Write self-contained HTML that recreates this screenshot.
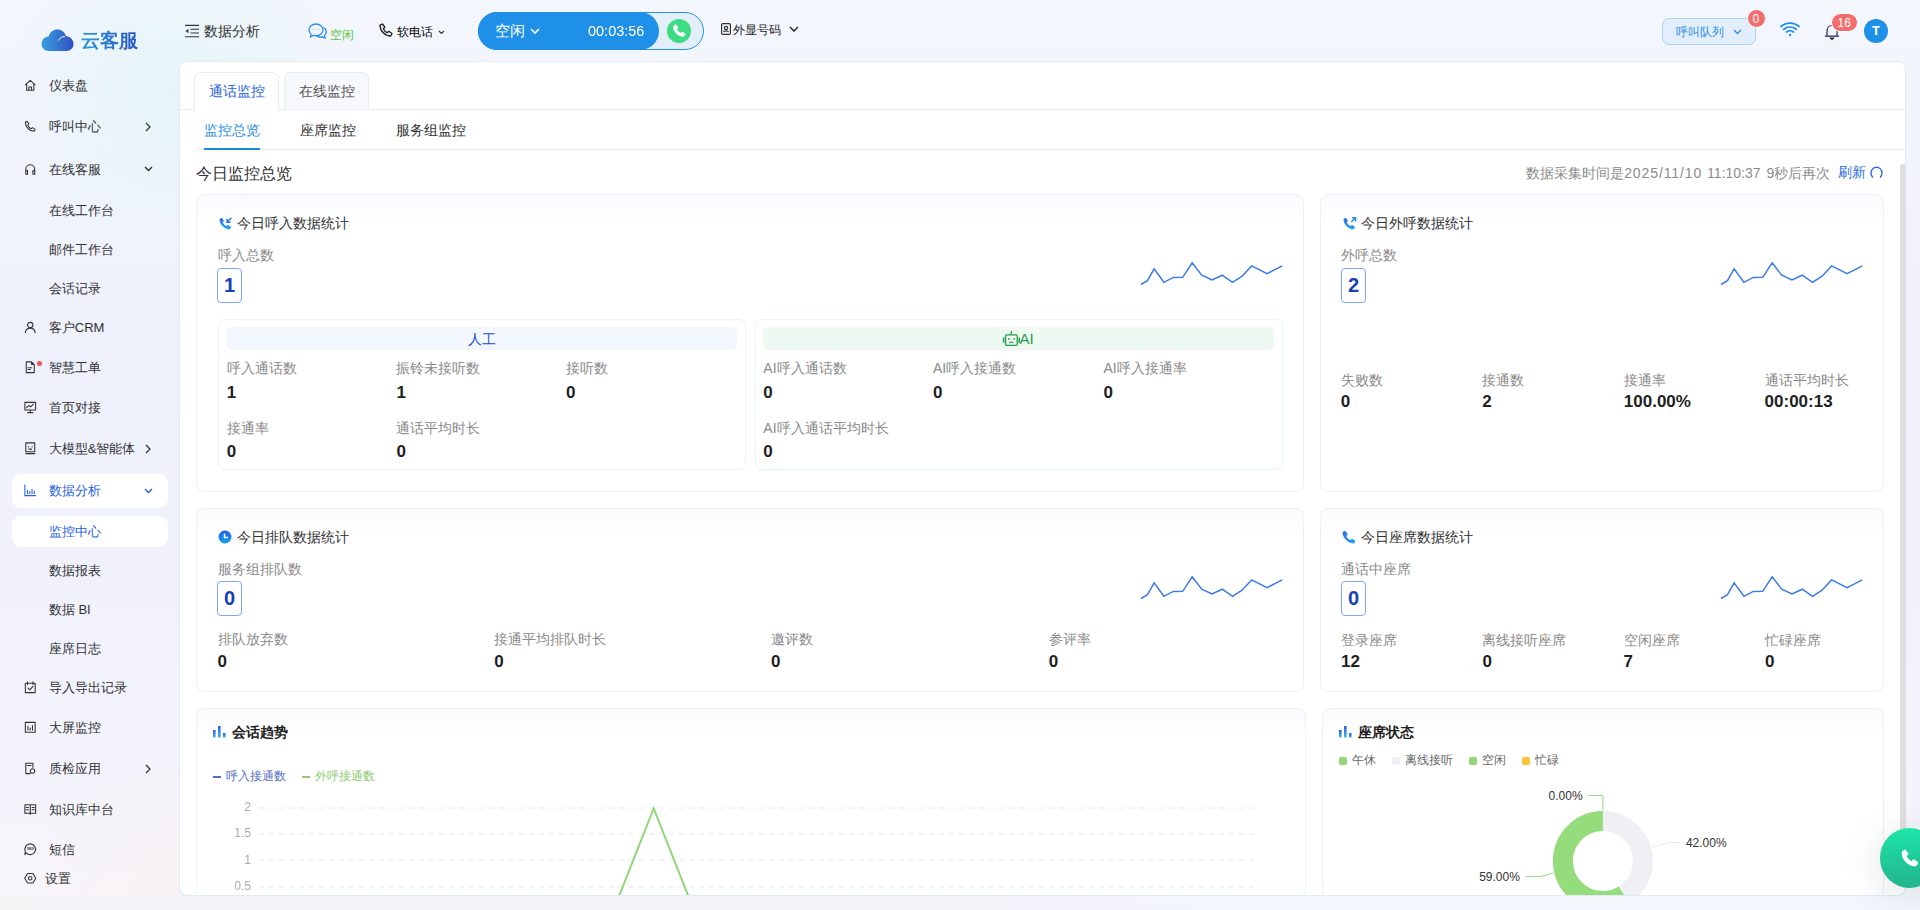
<!DOCTYPE html><html><head><meta charset="utf-8"><style>
*{margin:0;padding:0;box-sizing:border-box}
html,body{width:1920px;height:910px;overflow:hidden}
body{font-family:"Liberation Sans",sans-serif;position:relative;
background:
 radial-gradient(ellipse 240px 220px at 175px 90px, rgba(226,245,246,0.85), rgba(226,245,246,0) 70%),
 radial-gradient(ellipse 320px 220px at 230px 905px, rgba(251,240,240,0.8), rgba(251,240,240,0) 70%),
 linear-gradient(180deg,#f3f6fc 0%,#eef1fb 40%,#f0f1fb 65%,#f6f6fc 100%);}
.t{position:absolute;white-space:nowrap}
.abs{position:absolute}
svg{position:absolute;overflow:visible}
.card{position:absolute;background:linear-gradient(180deg,#f9fafd 0px,#ffffff 26px);border:1px solid #eef0f5;border-radius:8px}
</style></head><body>
<svg style="left:41px;top:29px" width="33" height="23" viewBox="0 0 33 23">
<defs><linearGradient id="lg" x1="0" y1="0" x2="1" y2="0"><stop offset="0" stop-color="#3aa0e0"/><stop offset="1" stop-color="#2f4fc2"/></linearGradient></defs>
<path d="M8 22 C3 22 0.5 18.5 0.5 15 C0.5 11 3.5 8 7.5 7.6 C9 3 12.5 0.5 16.5 0.5 C20.5 0.5 23.5 3 24.8 6.5 C25 7 24.5 7.2 24 7 C23 6.8 22 7.4 21.3 8 C22.8 7.1 24.5 6.9 26 7.2 C30 8 32.5 11 32.5 15 C32.5 19 29.5 22 25.5 22 Z" fill="url(#lg)"/>
<path d="M17.5 11.5 C18.5 9 21 7.5 24 7.5" stroke="#f4f7fc" stroke-width="1" fill="none"/>
</svg>
<div class="t" style="left:81px;top:27.5px;font-size:19px;font-weight:bold;line-height:26px;background:linear-gradient(90deg,#2b98dd,#2c55c4);-webkit-background-clip:text;color:transparent">云客服</div>
<div class="abs" style="left:12px;top:474px;width:156px;height:34px;background:#fff;border-radius:9px"></div>
<div class="abs" style="left:12px;top:516px;width:156px;height:31px;background:#fff;border-radius:9px"></div>
<svg style="left:24px;top:79.2px" width="12.5" height="12.5" viewBox="0 0 14 14" fill="none" stroke="#333" stroke-width="1.2" stroke-linejoin="round" stroke-linecap="round"><path d="M1.5 6.5 L7 1.5 L12.5 6.5 M3 5.5 V12.5 H11 V5.5 M5.5 12.5 V9 H8.5 V12.5" /></svg>
<div class="t" style="left:48.8px;top:76.2px;font-size:13px;color:#303133;font-weight:normal;line-height:20px;">仪表盘</div>
<svg style="left:24px;top:120.0px" width="12.5" height="12.5" viewBox="0 0 14 14" fill="none" stroke="#333" stroke-width="1.2" stroke-linejoin="round" stroke-linecap="round"><path d="M3.5 1.5 L5.5 4.5 L4.3 6 C5 8 6 9 8 9.7 L9.5 8.5 L12.5 10.5 L11.5 12.5 C6 12.5 1.5 8 1.5 2.5 Z" /></svg>
<div class="t" style="left:48.8px;top:117.0px;font-size:13px;color:#303133;font-weight:normal;line-height:20px;">呼叫中心</div>
<svg style="left:145px;top:122.1px" width="6" height="10" viewBox="0 0 6 10"><path d="M1 1 L5 5 L1 9" stroke="#333" stroke-width="1.25" fill="none"/></svg>
<svg style="left:24px;top:162.9px" width="12.5" height="12.5" viewBox="0 0 14 14" fill="none" stroke="#333" stroke-width="1.2" stroke-linejoin="round" stroke-linecap="round"><path d="M2 11 V7 A5 5 0 0 1 12 7 V11 M2 8.5 H4 V12.5 H2 Z M10 8.5 H12 V12.5 H10 Z" /></svg>
<div class="t" style="left:48.8px;top:159.9px;font-size:13px;color:#303133;font-weight:normal;line-height:20px;">在线客服</div>
<svg style="left:144px;top:166.4px" width="9" height="5.5" viewBox="0 0 9 5.5"><path d="M1 1 L4.5 4.5 L8 1" stroke="#303133" stroke-width="1.4" fill="none"/></svg>
<div class="t" style="left:48.8px;top:200.5px;font-size:13px;color:#303133;font-weight:normal;line-height:20px;">在线工作台</div>
<div class="t" style="left:48.8px;top:239.7px;font-size:13px;color:#303133;font-weight:normal;line-height:20px;">邮件工作台</div>
<div class="t" style="left:48.8px;top:279.0px;font-size:13px;color:#303133;font-weight:normal;line-height:20px;">会话记录</div>
<svg style="left:24px;top:320.9px" width="12.5" height="12.5" viewBox="0 0 14 14" fill="none" stroke="#333" stroke-width="1.2" stroke-linejoin="round" stroke-linecap="round"><circle cx="7" cy="4.5" r="3"/><path d="M1.5 13 C2 9.5 4.2 8 7 8 C9.8 8 12 9.5 12.5 13"/></svg>
<div class="t" style="left:48.8px;top:317.8px;font-size:13px;color:#303133;font-weight:normal;line-height:20px;">客户CRM</div>
<svg style="left:24px;top:361.1px" width="12.5" height="12.5" viewBox="0 0 14 14" fill="none" stroke="#333" stroke-width="1.2" stroke-linejoin="round" stroke-linecap="round"><path d="M2.5 1 H8.5 L11.5 4 V13 H2.5 Z M8.5 1 V4 H11.5 M4.5 7.5 H8.5 M4.5 9.5 H7"/></svg>
<div class="t" style="left:48.8px;top:358.1px;font-size:13px;color:#303133;font-weight:normal;line-height:20px;">智慧工单</div>
<svg style="left:24px;top:400.8px" width="12.5" height="12.5" viewBox="0 0 14 14" fill="none" stroke="#333" stroke-width="1.2" stroke-linejoin="round" stroke-linecap="round"><path d="M1 1.5 H13 V10 H1 Z M4 13 H10 M7 10 V13 M3 7.5 L5.5 5 L7.5 6.5 L10.5 3.5"/></svg>
<div class="t" style="left:48.8px;top:397.7px;font-size:13px;color:#303133;font-weight:normal;line-height:20px;">首页对接</div>
<svg style="left:24px;top:441.9px" width="12.5" height="12.5" viewBox="0 0 14 14" fill="none" stroke="#333" stroke-width="1.2" stroke-linejoin="round" stroke-linecap="round"><path d="M2 1 H12 V11 H2 Z M2 13 H12 M5 5 V5.5 M9 5 V5.5 M5.5 8 H8.5"/></svg>
<div class="t" style="left:48.8px;top:438.8px;font-size:13px;color:#303133;font-weight:normal;line-height:20px;">大模型&amp;智能体</div>
<svg style="left:145px;top:443.90000000000003px" width="6" height="10" viewBox="0 0 6 10"><path d="M1 1 L5 5 L1 9" stroke="#333" stroke-width="1.25" fill="none"/></svg>
<svg style="left:24px;top:484.1px" width="12.5" height="12.5" viewBox="0 0 14 14" fill="none" stroke="#2560e6" stroke-width="1.2" stroke-linejoin="round" stroke-linecap="round"><path d="M1 1 V13 H13 M4 11 V7 M6.5 11 V8.5 M9 11 V6 M11.5 11 V8"/></svg>
<div class="t" style="left:48.8px;top:481.0px;font-size:13px;color:#2560e6;font-weight:normal;line-height:20px;">数据分析</div>
<svg style="left:144px;top:487.6px" width="9" height="5.5" viewBox="0 0 9 5.5"><path d="M1 1 L4.5 4.5 L8 1" stroke="#2560e6" stroke-width="1.4" fill="none"/></svg>
<div class="t" style="left:48.8px;top:521.8px;font-size:13px;color:#2560e6;font-weight:normal;line-height:20px;">监控中心</div>
<div class="t" style="left:48.8px;top:560.9px;font-size:13px;color:#303133;font-weight:normal;line-height:20px;">数据报表</div>
<div class="t" style="left:48.8px;top:599.6px;font-size:13px;color:#303133;font-weight:normal;line-height:20px;">数据 BI</div>
<div class="t" style="left:48.8px;top:639.1px;font-size:13px;color:#303133;font-weight:normal;line-height:20px;">座席日志</div>
<svg style="left:24px;top:680.8px" width="12.5" height="12.5" viewBox="0 0 14 14" fill="none" stroke="#333" stroke-width="1.2" stroke-linejoin="round" stroke-linecap="round"><path d="M1.5 2.5 H12.5 V13 H1.5 Z M4 1 V4 M10 1 V4 M4.5 8 L6.5 10 L10 6"/></svg>
<div class="t" style="left:48.8px;top:677.7px;font-size:13px;color:#303133;font-weight:normal;line-height:20px;">导入导出记录</div>
<svg style="left:24px;top:721.0px" width="12.5" height="12.5" viewBox="0 0 14 14" fill="none" stroke="#333" stroke-width="1.2" stroke-linejoin="round" stroke-linecap="round"><path d="M1.5 1.5 H12.5 V12.5 H1.5 Z M4.5 10 V6 M7 10 V8 M9.5 10 V5"/></svg>
<div class="t" style="left:48.8px;top:718.0px;font-size:13px;color:#303133;font-weight:normal;line-height:20px;">大屏监控</div>
<svg style="left:24px;top:761.8px" width="12.5" height="12.5" viewBox="0 0 14 14" fill="none" stroke="#333" stroke-width="1.2" stroke-linejoin="round" stroke-linecap="round"><path d="M7 13 H2 V1.5 H10 V6 M4 4 H8"/><circle cx="9.5" cy="10" r="2.5"/></svg>
<div class="t" style="left:48.8px;top:758.7px;font-size:13px;color:#303133;font-weight:normal;line-height:20px;">质检应用</div>
<svg style="left:145px;top:763.8px" width="6" height="10" viewBox="0 0 6 10"><path d="M1 1 L5 5 L1 9" stroke="#333" stroke-width="1.25" fill="none"/></svg>
<svg style="left:24px;top:803.0px" width="12.5" height="12.5" viewBox="0 0 14 14" fill="none" stroke="#333" stroke-width="1.2" stroke-linejoin="round" stroke-linecap="round"><path d="M1 2 H6 C6.6 2 7 2.4 7 3 V12.5 C7 12 6.6 11.5 6 11.5 H1 Z M13 2 H8 C7.4 2 7 2.4 7 3 V12.5 C7 12 7.4 11.5 8 11.5 H13 Z M2.5 5 H5 M2.5 7.5 H5 M9 5 H11.5 M9 7.5 H11.5"/></svg>
<div class="t" style="left:48.8px;top:800.0px;font-size:13px;color:#303133;font-weight:normal;line-height:20px;">知识库中台</div>
<svg style="left:24px;top:842.5px" width="12.5" height="12.5" viewBox="0 0 14 14" fill="none" stroke="#333" stroke-width="1.2" stroke-linejoin="round" stroke-linecap="round"><path d="M7 1 A6 6 0 1 1 2.5 11 L1 13 L1.5 9.5 A6 6 0 0 1 7 1 Z"/><text x="7.2" y="8.4" font-size="4" text-anchor="middle" font-family="Liberation Sans" font-weight="bold" stroke="none" fill="#333" textLength="7.6" lengthAdjust="spacingAndGlyphs">SMS</text></svg>
<div class="t" style="left:48.8px;top:839.5px;font-size:13px;color:#303133;font-weight:normal;line-height:20px;">短信</div>
<svg style="left:24px;top:871.5px" width="12.5" height="12.5" viewBox="0 0 14 14" fill="none" stroke="#333" stroke-width="1.2" stroke-linejoin="round" stroke-linecap="round"><path d="M0.8 7 L4 1.6 H10 L13.2 7 L10 12.4 H4 Z"/><circle cx="7" cy="7" r="2"/></svg>
<div class="t" style="left:44.5px;top:868.5px;font-size:13px;color:#303133;font-weight:normal;line-height:20px;">设置</div>
<div class="abs" style="left:37px;top:361px;width:5px;height:5px;border-radius:50%;background:#f5534f"></div>
<svg style="left:185px;top:24px" width="14" height="14" viewBox="0 0 14 14" fill="none" stroke="#283248" stroke-width="1.1"><path d="M0 1.4 H14 M5.4 5.3 H14 M5.4 9 H14 M0 12.7 H14"/><path d="M0.4 7.1 L3.4 4.9 V9.3 Z" fill="#283248" stroke="none"/></svg>
<div class="t" style="left:204px;top:20.9px;font-size:14px;color:#303133;font-weight:normal;line-height:20px;">数据分析</div>
<svg style="left:308px;top:23px" width="19" height="16" viewBox="0 0 19 16" fill="none" stroke="#2d8ff0" stroke-width="1.3"><path d="M8 1 C4 1 1 3.5 1 6.8 C1 8.5 1.8 10 3 11 L2.5 14 L5.5 12.3 C6.3 12.5 7.1 12.6 8 12.6 C12 12.6 15 10 15 6.8 C15 3.5 12 1 8 1 Z"/><path d="M15.5 4.5 C17.3 5.5 18.3 7 18.3 8.8 C18.3 10.3 17.6 11.6 16.5 12.5 L17 15 L14.5 13.8 C13.8 14 13 14 12.3 14 C11 14 9.8 13.7 8.8 13.2"/><circle cx="5" cy="6.8" r="0.45" fill="#2d8ff0" stroke="none"/><circle cx="8" cy="6.8" r="0.45" fill="#2d8ff0" stroke="none"/><circle cx="11" cy="6.8" r="0.45" fill="#2d8ff0" stroke="none"/></svg>
<div class="t" style="left:330px;top:24.7px;font-size:12px;color:#5cc43c;font-weight:normal;line-height:20px;">空闲</div>
<svg style="left:379px;top:23px" width="14" height="14" viewBox="0 0 14 14" fill="none" stroke="#1f1f1f" stroke-width="1.3" stroke-linejoin="round"><path d="M3.5 1 L5.8 4.2 L4.4 5.8 C5.2 7.8 6.3 8.9 8.2 9.7 L9.8 8.3 L13 10.5 L11.8 13 C6 13 1 8 1 2.2 Z"/></svg>
<div class="t" style="left:397px;top:22.1px;font-size:12px;color:#000;font-weight:500;line-height:20px;">软电话</div>
<svg style="left:437.5px;top:29.8px" width="7" height="4.5" viewBox="0 0 7 4.5"><path d="M1 1 L3.5 3.5 L6 1" stroke="#333" stroke-width="1.2" fill="none"/></svg>
<div class="abs" style="left:478px;top:12px;width:226px;height:38px;border-radius:19px;background:#e3eefb;border:1px solid #2a90e6"></div>
<div class="abs" style="left:478px;top:12px;width:181px;height:38px;border-radius:19px;background:#1e90e7"></div>
<div class="t" style="left:494.5px;top:20.9px;font-size:15px;color:#fff;font-weight:normal;line-height:20px;">空闲</div>
<svg style="left:530px;top:28.3px" width="10" height="6.0" viewBox="0 0 10 6.0"><path d="M1 1 L5.0 5.0 L9 1" stroke="#fff" stroke-width="1.6" fill="none"/></svg>
<div class="t" style="left:587.5px;top:20.7px;font-size:15.5px;color:#fff;font-weight:normal;line-height:20px;transform:scaleX(0.935);transform-origin:0 50%;">00:03:56</div>
<div class="abs" style="left:667px;top:19px;width:24px;height:24px;border-radius:50%;background:#3ddc84"></div>
<svg style="left:672.3px;top:23.8px" width="14" height="14" viewBox="0 0 24 24"><path d="M2.2 5 Q2 3.6 3.2 2.6 L5.6 0.9 Q6.6 0.3 7.3 1.2 L10.6 5.8 Q11.1 6.6 10.3 7.3 L8.3 8.9 Q10.2 13 14.6 15.4 L16.4 13.5 Q17.1 12.8 18 13.3 L22.6 16.5 Q23.5 17.3 22.8 18.3 L21 20.8 Q20.1 22 18.6 22 Q9.5 21.5 3.8 12 Q2.4 8.8 2.2 5 Z" fill="#fff"/></svg>
<svg style="left:721px;top:23px" width="10" height="12" viewBox="0 0 10 12" fill="none" stroke="#333" stroke-width="1.2"><rect x="0.6" y="0.6" width="8.8" height="10.8" rx="1.2"/><circle cx="5" cy="5" r="1.6"/><path d="M2.5 9 C3 7.5 7 7.5 7.5 9"/></svg>
<div class="t" style="left:733px;top:19.5px;font-size:12px;color:#1f1f1f;font-weight:normal;line-height:20px;">外显号码</div>
<svg style="left:789px;top:25.9px" width="10" height="6.0" viewBox="0 0 10 6.0"><path d="M1 1 L5.0 5.0 L9 1" stroke="#1f1f1f" stroke-width="1.4" fill="none"/></svg>
<div class="abs" style="left:1662px;top:18px;width:94px;height:27px;border-radius:7px;background:#e2eefc;border:1px solid #a9d2f6"></div>
<div class="t" style="left:1675.6px;top:22.3px;font-size:12px;color:#2b8fe6;font-weight:normal;line-height:20px;">呼叫队列</div>
<svg style="left:1733px;top:28.6px" width="9" height="5.5" viewBox="0 0 9 5.5"><path d="M1 1 L4.5 4.5 L8 1" stroke="#2b8fe6" stroke-width="1.4" fill="none"/></svg>
<div class="abs" style="left:1746.5px;top:8.5px;width:19px;height:19px;border-radius:50%;background:#f26d6d;border:1px solid #fff"></div>
<div class="t" style="left:1752.5px;top:10.9px;font-size:12px;color:#fff;font-weight:normal;line-height:16px;">0</div>
<svg style="left:1780px;top:22px" width="20" height="15" viewBox="0 0 20 15" fill="none" stroke="#1e8fe6" stroke-width="1.8" stroke-linecap="round"><path d="M1 4.5 C6 0 14 0 19 4.5"/><path d="M3.8 7.3 C7.5 4.3 12.5 4.3 16.2 7.3"/><path d="M6.6 10 C8.8 8.3 11.2 8.3 13.4 10"/><circle cx="10" cy="13" r="1.2" fill="#1e8fe6" stroke="none"/></svg>
<svg style="left:1824px;top:24px" width="16" height="16" viewBox="0 0 16 16" fill="none" stroke="#1f2b4d" stroke-width="1.2"><path d="M3 12 V7 C3 4 5 1.5 8 1.5 C11 1.5 13 4 13 7 V12 M1 12.2 H15"/><path d="M6.5 14 H9.5 L8 15.5 Z" fill="#1f2b4d"/></svg>
<div class="abs" style="left:1830.5px;top:13px;width:27px;height:19px;border-radius:9.5px;background:#f26d6d;border:1px solid #fff"></div>
<div class="t" style="left:1837.5px;top:15.2px;font-size:12px;color:#fff;font-weight:normal;line-height:16px;">16</div>
<div class="abs" style="left:1864px;top:19px;width:24px;height:24px;border-radius:50%;background:#1e90e7"></div>
<div class="t" style="left:1872px;top:23.2px;font-size:13px;color:#fff;font-weight:bold;line-height:16px;">T</div>
<div class="abs" style="left:179px;top:61px;width:1727px;height:835px;background:#fff;border-radius:8px;border:1px solid #e2ebf5"></div>
<div class="abs" style="left:180px;top:109px;width:1726px;height:1px;background:#e8ebf0"></div>
<div class="abs" style="left:194px;top:72px;width:85px;height:38px;background:#fff;border:1px solid #e8ebf0;border-bottom:none;border-radius:7px 7px 0 0"></div>
<div class="abs" style="left:284px;top:72px;width:85px;height:37px;background:#f7f8fb;border:1px solid #e8ebf0;border-bottom:none;border-radius:7px 7px 0 0"></div>
<div class="t" style="left:209px;top:80.8px;font-size:14px;color:#2a63e6;font-weight:normal;line-height:20px;">通话监控</div>
<div class="t" style="left:299px;top:80.8px;font-size:14px;color:#555;font-weight:normal;line-height:20px;">在线监控</div>
<div class="abs" style="left:196px;top:149px;width:1710px;height:1px;background:#e8ebf0"></div>
<div class="abs" style="left:204px;top:148px;width:56px;height:2px;background:#1e88e5"></div>
<div class="t" style="left:204px;top:119.9px;font-size:14px;color:#2d8fe8;font-weight:normal;line-height:20px;">监控总览</div>
<div class="t" style="left:300.3px;top:119.9px;font-size:14px;color:#303133;font-weight:normal;line-height:20px;">座席监控</div>
<div class="t" style="left:396.4px;top:119.9px;font-size:14px;color:#303133;font-weight:normal;line-height:20px;">服务组监控</div>
<div class="t" style="left:196.4px;top:164.4px;font-size:16px;color:#303133;font-weight:normal;line-height:20px;">今日监控总览</div>
<div class="t" style="left:1526px;top:163.3px;font-size:14px;color:#8c8c8c;font-weight:normal;line-height:20px;">数据采集时间是</div>
<div class="t" style="left:1624.2px;top:163.3px;font-size:14px;color:#8c8c8c;font-weight:normal;line-height:20px;letter-spacing:0.9px;">2025/11/10</div>
<div class="t" style="left:1707.1px;top:163.3px;font-size:14px;color:#8c8c8c;font-weight:normal;line-height:20px;">11:10:37</div>
<div class="t" style="left:1766.5px;top:163.3px;font-size:14px;color:#8c8c8c;font-weight:normal;line-height:20px;">9秒后再次</div>
<div class="t" style="left:1838px;top:163.3px;font-size:13.5px;color:#2b6ae6;font-weight:normal;line-height:20px;">刷新</div>
<svg style="left:1870px;top:166px" width="13" height="13" viewBox="0 0 13 13" fill="none" stroke="#2b6ae6" stroke-width="1.4"><path d="M3 11.5 C1.5 10.5 1 9 1 7 C1 3.7 3.5 1.2 6.5 1.2 C9.5 1.2 12 3.7 12 7 C12 9 11.2 10.5 10 11.5"/></svg>
<div class="abs" style="left:1900px;top:164px;width:6px;height:720px;background:#dedede;border-radius:3px"></div>
<div class="card" style="left:196px;top:194px;width:1108px;height:298px"></div>
<div class="card" style="left:1320px;top:194px;width:564px;height:298px"></div>
<div class="card" style="left:196px;top:508px;width:1108px;height:184px"></div>
<div class="card" style="left:1320px;top:508px;width:564px;height:184px"></div>
<div class="card" style="left:196px;top:708px;width:1110px;height:222px"></div>
<div class="card" style="left:1322px;top:708px;width:562px;height:222px"></div>
<svg style="left:218.5px;top:217px" width="14" height="13" viewBox="0 0 14 13"><defs><linearGradient id="gi218" x1="0" y1="0" x2="0" y2="1"><stop offset="0" stop-color="#2a6de8"/><stop offset="1" stop-color="#2aa6ee"/></linearGradient></defs>
<path d="M2.8 0.8 L5 3.8 L3.8 5.3 C4.6 7.2 5.6 8.2 7.5 9 L9 7.8 L12 10 L10.8 12.4 C5.5 12.4 0.5 7.5 0.5 2 Z" fill="url(#gi218)"/>
<path d="M12.5 0.8 L8.2 5.1 M8 1.8 V5.3 H11.5" stroke="#2a7ae8" stroke-width="1.4" fill="none"/></svg>
<div class="t" style="left:237.2px;top:212.8px;font-size:14px;color:#303133;font-weight:normal;line-height:20px;">今日呼入数据统计</div>
<div class="t" style="left:217.7px;top:246.0px;font-size:13.5px;color:#8a8a8a;font-weight:normal;line-height:20px;">呼入总数</div>
<div class="abs" style="left:217px;top:268px;width:25px;height:35px;border:1px solid #7ea8f5;border-radius:4px;text-align:center;line-height:33px;font-size:20px;font-weight:bold;color:#1740b5">1</div>
<svg style="left:1141.3px;top:255px" width="142" height="32" viewBox="0 0 142 32"><path d="M0.0 29.5 L6.5 25.7 L13.1 13.9 L22.9 27.3 L32.3 22.4 L41.7 22.3 L51.2 7.8 L60.7 20.2 L71.0 24.9 L81.3 20.2 L91.5 27.4 L101.1 21.2 L110.6 10.9 L126.1 18.7 L141.3 10.9" fill="none" stroke="#3b7be8" stroke-width="1.5" stroke-linejoin="miter"/></svg>
<div class="abs" style="left:217.5px;top:318.5px;width:528px;height:151.5px;border:1px solid #edf1f8;border-radius:7px"></div>
<div class="abs" style="left:226px;top:327px;width:511px;height:23px;background:#f2f6fd;border-radius:5px"></div>
<div class="t" style="left:468px;top:329.2px;font-size:14px;color:#1c4cc8;font-weight:normal;line-height:20px;">人工</div>
<div class="t" style="left:226.7px;top:357.7px;font-size:14px;color:#8a8a8a;font-weight:normal;line-height:20px;">呼入通话数</div>
<div class="t" style="left:226.7px;top:382.5px;font-size:17px;color:#1f1f1f;font-weight:bold;line-height:20px;">1</div>
<div class="t" style="left:396.4px;top:357.7px;font-size:14px;color:#8a8a8a;font-weight:normal;line-height:20px;">振铃未接听数</div>
<div class="t" style="left:396.4px;top:382.5px;font-size:17px;color:#1f1f1f;font-weight:bold;line-height:20px;">1</div>
<div class="t" style="left:566px;top:357.7px;font-size:14px;color:#8a8a8a;font-weight:normal;line-height:20px;">接听数</div>
<div class="t" style="left:566px;top:382.5px;font-size:17px;color:#1f1f1f;font-weight:bold;line-height:20px;">0</div>
<div class="t" style="left:226.7px;top:417.5px;font-size:14px;color:#8a8a8a;font-weight:normal;line-height:20px;">接通率</div>
<div class="t" style="left:226.7px;top:442.3px;font-size:17px;color:#1f1f1f;font-weight:bold;line-height:20px;">0</div>
<div class="t" style="left:396.4px;top:417.5px;font-size:14px;color:#8a8a8a;font-weight:normal;line-height:20px;">通话平均时长</div>
<div class="t" style="left:396.4px;top:442.3px;font-size:17px;color:#1f1f1f;font-weight:bold;line-height:20px;">0</div>
<div class="abs" style="left:754.5px;top:318.5px;width:528px;height:151.5px;border:1px solid #e6f7ec;border-radius:7px"></div>
<div class="abs" style="left:763px;top:327px;width:511px;height:23px;background:#eefaf1;border-radius:5px"></div>
<svg style="left:1002px;top:330px" width="18" height="17" viewBox="0 0 18 17" fill="none" stroke="#1f9d50" stroke-width="1.3"><rect x="3.6" y="4.9" width="11.6" height="10.4" rx="1"/><path d="M9.4 4.6 V2.4"/><circle cx="9.4" cy="1.9" r="0.9" fill="#1f9d50" stroke="none"/><path d="M1.6 7.5 V12.8 M17.2 7.5 V12.8" stroke-width="1.5"/><circle cx="6.8" cy="8.9" r="0.9" fill="#1f9d50" stroke="none"/><circle cx="12.2" cy="8.9" r="0.9" fill="#1f9d50" stroke="none"/><path d="M7.3 12.3 H11.5" stroke-width="1.2"/></svg>
<div class="t" style="left:1019.5px;top:328.6px;font-size:15px;color:#1f9d50;font-weight:normal;line-height:20px;">AI</div>
<div class="t" style="left:763.3px;top:357.7px;font-size:14px;color:#8a8a8a;font-weight:normal;line-height:20px;">AI呼入通话数</div>
<div class="t" style="left:763.3px;top:382.5px;font-size:17px;color:#1f1f1f;font-weight:bold;line-height:20px;">0</div>
<div class="t" style="left:933px;top:357.7px;font-size:14px;color:#8a8a8a;font-weight:normal;line-height:20px;">AI呼入接通数</div>
<div class="t" style="left:933px;top:382.5px;font-size:17px;color:#1f1f1f;font-weight:bold;line-height:20px;">0</div>
<div class="t" style="left:1103.5px;top:357.7px;font-size:14px;color:#8a8a8a;font-weight:normal;line-height:20px;">AI呼入接通率</div>
<div class="t" style="left:1103.5px;top:382.5px;font-size:17px;color:#1f1f1f;font-weight:bold;line-height:20px;">0</div>
<div class="t" style="left:763.3px;top:417.5px;font-size:14px;color:#8a8a8a;font-weight:normal;line-height:20px;">AI呼入通话平均时长</div>
<div class="t" style="left:763.3px;top:442.3px;font-size:17px;color:#1f1f1f;font-weight:bold;line-height:20px;">0</div>
<svg style="left:1342.5px;top:217px" width="14" height="13" viewBox="0 0 14 13"><defs><linearGradient id="go1342" x1="0" y1="0" x2="0" y2="1"><stop offset="0" stop-color="#2a6de8"/><stop offset="1" stop-color="#2aa6ee"/></linearGradient></defs>
<path d="M2.8 0.8 L5 3.8 L3.8 5.3 C4.6 7.2 5.6 8.2 7.5 9 L9 7.8 L12 10 L10.8 12.4 C5.5 12.4 0.5 7.5 0.5 2 Z" fill="url(#go1342)"/>
<path d="M8.2 5.1 L12.5 0.8 M9 0.8 H12.6 V4.4" stroke="#2a8ae8" stroke-width="1.4" fill="none"/></svg>
<div class="t" style="left:1361.2px;top:212.8px;font-size:14px;color:#303133;font-weight:normal;line-height:20px;">今日外呼数据统计</div>
<div class="t" style="left:1341px;top:246.0px;font-size:13.5px;color:#8a8a8a;font-weight:normal;line-height:20px;">外呼总数</div>
<div class="abs" style="left:1341px;top:268px;width:25px;height:35px;border:1px solid #7ea8f5;border-radius:4px;text-align:center;line-height:33px;font-size:20px;font-weight:bold;color:#1740b5">2</div>
<svg style="left:1721.3px;top:255px" width="142" height="32" viewBox="0 0 142 32"><path d="M0.0 29.5 L6.5 25.7 L13.1 13.9 L22.9 27.3 L32.3 22.4 L41.7 22.3 L51.2 7.8 L60.7 20.2 L71.0 24.9 L81.3 20.2 L91.5 27.4 L101.1 21.2 L110.6 10.9 L126.1 18.7 L141.3 10.9" fill="none" stroke="#3b7be8" stroke-width="1.5" stroke-linejoin="miter"/></svg>
<div class="t" style="left:1340.8px;top:369.9px;font-size:14px;color:#8a8a8a;font-weight:normal;line-height:20px;">失败数</div>
<div class="t" style="left:1340.8px;top:391.7px;font-size:17px;color:#1f1f1f;font-weight:bold;line-height:20px;">0</div>
<div class="t" style="left:1482.3px;top:369.9px;font-size:14px;color:#8a8a8a;font-weight:normal;line-height:20px;">接通数</div>
<div class="t" style="left:1482.3px;top:391.7px;font-size:17px;color:#1f1f1f;font-weight:bold;line-height:20px;">2</div>
<div class="t" style="left:1623.8px;top:369.9px;font-size:14px;color:#8a8a8a;font-weight:normal;line-height:20px;">接通率</div>
<div class="t" style="left:1623.8px;top:391.7px;font-size:17px;color:#1f1f1f;font-weight:bold;line-height:20px;">100.00%</div>
<div class="t" style="left:1764.6px;top:369.9px;font-size:14px;color:#8a8a8a;font-weight:normal;line-height:20px;">通话平均时长</div>
<div class="t" style="left:1764.6px;top:391.7px;font-size:17px;color:#1f1f1f;font-weight:bold;line-height:20px;">00:00:13</div>
<svg style="left:217.5px;top:530px" width="14" height="14" viewBox="0 0 14 14"><defs><linearGradient id="gc" x1="0" y1="0" x2="0" y2="1"><stop offset="0" stop-color="#1a5ee8"/><stop offset="1" stop-color="#1ba2ea"/></linearGradient></defs><circle cx="7" cy="7" r="6.5" fill="url(#gc)"/><path d="M6.5 3.5 V7.5 H10" stroke="#fff" stroke-width="1.5" fill="none"/></svg>
<div class="t" style="left:237.4px;top:526.5px;font-size:14px;color:#303133;font-weight:normal;line-height:20px;">今日排队数据统计</div>
<div class="t" style="left:217.5px;top:560.2px;font-size:13.5px;color:#8a8a8a;font-weight:normal;line-height:20px;">服务组排队数</div>
<div class="abs" style="left:217px;top:581px;width:25px;height:35px;border:1px solid #7ea8f5;border-radius:4px;text-align:center;line-height:33px;font-size:20px;font-weight:bold;color:#1740b5">0</div>
<svg style="left:1141.3px;top:569px" width="142" height="32" viewBox="0 0 142 32"><path d="M0.0 29.5 L6.5 25.7 L13.1 13.9 L22.9 27.3 L32.3 22.4 L41.7 22.3 L51.2 7.8 L60.7 20.2 L71.0 24.9 L81.3 20.2 L91.5 27.4 L101.1 21.2 L110.6 10.9 L126.1 18.7 L141.3 10.9" fill="none" stroke="#3b7be8" stroke-width="1.5" stroke-linejoin="miter"/></svg>
<div class="t" style="left:217.5px;top:629.4px;font-size:14px;color:#8a8a8a;font-weight:normal;line-height:20px;">排队放弃数</div>
<div class="t" style="left:217.5px;top:651.9px;font-size:17px;color:#1f1f1f;font-weight:bold;line-height:20px;">0</div>
<div class="t" style="left:494.2px;top:629.4px;font-size:14px;color:#8a8a8a;font-weight:normal;line-height:20px;">接通平均排队时长</div>
<div class="t" style="left:494.2px;top:651.9px;font-size:17px;color:#1f1f1f;font-weight:bold;line-height:20px;">0</div>
<div class="t" style="left:771.1px;top:629.4px;font-size:14px;color:#8a8a8a;font-weight:normal;line-height:20px;">邀评数</div>
<div class="t" style="left:771.1px;top:651.9px;font-size:17px;color:#1f1f1f;font-weight:bold;line-height:20px;">0</div>
<div class="t" style="left:1048.8px;top:629.4px;font-size:14px;color:#8a8a8a;font-weight:normal;line-height:20px;">参评率</div>
<div class="t" style="left:1048.8px;top:651.9px;font-size:17px;color:#1f1f1f;font-weight:bold;line-height:20px;">0</div>
<svg style="left:1342px;top:530px" width="14" height="14" viewBox="0 0 14 14"><defs><linearGradient id="gp" x1="0" y1="0" x2="1" y2="1"><stop offset="0" stop-color="#2a6de8"/><stop offset="1" stop-color="#2aa6ee"/></linearGradient></defs><path d="M3.2 0.8 L5.8 4.3 L4.4 6 C5.3 8.1 6.3 9.1 8.4 10 L10 8.6 L13.4 11 L12.2 13.5 C6 13.5 0.5 8 0.5 2 Z" fill="url(#gp)"/></svg>
<div class="t" style="left:1361.3px;top:526.6px;font-size:14px;color:#303133;font-weight:normal;line-height:20px;">今日座席数据统计</div>
<div class="t" style="left:1341px;top:560.1px;font-size:13.5px;color:#8a8a8a;font-weight:normal;line-height:20px;">通话中座席</div>
<div class="abs" style="left:1341px;top:581px;width:25px;height:35px;border:1px solid #7ea8f5;border-radius:4px;text-align:center;line-height:33px;font-size:20px;font-weight:bold;color:#1740b5">0</div>
<svg style="left:1721.3px;top:569px" width="142" height="32" viewBox="0 0 142 32"><path d="M0.0 29.5 L6.5 25.7 L13.1 13.9 L22.9 27.3 L32.3 22.4 L41.7 22.3 L51.2 7.8 L60.7 20.2 L71.0 24.9 L81.3 20.2 L91.5 27.4 L101.1 21.2 L110.6 10.9 L126.1 18.7 L141.3 10.9" fill="none" stroke="#3b7be8" stroke-width="1.5" stroke-linejoin="miter"/></svg>
<div class="t" style="left:1341px;top:630.2px;font-size:14px;color:#8a8a8a;font-weight:normal;line-height:20px;">登录座席</div>
<div class="t" style="left:1341px;top:651.5px;font-size:17px;color:#1f1f1f;font-weight:bold;line-height:20px;">12</div>
<div class="t" style="left:1482.4px;top:630.2px;font-size:14px;color:#8a8a8a;font-weight:normal;line-height:20px;">离线接听座席</div>
<div class="t" style="left:1482.4px;top:651.5px;font-size:17px;color:#1f1f1f;font-weight:bold;line-height:20px;">0</div>
<div class="t" style="left:1623.5px;top:630.2px;font-size:14px;color:#8a8a8a;font-weight:normal;line-height:20px;">空闲座席</div>
<div class="t" style="left:1623.5px;top:651.5px;font-size:17px;color:#1f1f1f;font-weight:bold;line-height:20px;">7</div>
<div class="t" style="left:1765px;top:630.2px;font-size:14px;color:#8a8a8a;font-weight:normal;line-height:20px;">忙碌座席</div>
<div class="t" style="left:1765px;top:651.5px;font-size:17px;color:#1f1f1f;font-weight:bold;line-height:20px;">0</div>
<svg style="left:212.5px;top:726px" width="14" height="12" viewBox="0 0 14 12"><defs><linearGradient id="gb212" x1="0" y1="0" x2="0" y2="1"><stop offset="0" stop-color="#2a5fe6"/><stop offset="1" stop-color="#40b0f0"/></linearGradient></defs><rect x="0" y="4" width="2.6" height="7.5" fill="url(#gb212)"/><rect x="5" y="0" width="2.6" height="11.5" fill="url(#gb212)"/><rect x="10" y="7" width="2.6" height="4.5" fill="url(#gb212)"/></svg>
<div class="t" style="left:232px;top:722.4px;font-size:14px;color:#1f1f1f;font-weight:bold;line-height:20px;">会话趋势</div>
<div class="abs" style="left:212.5px;top:775.5px;width:8px;height:2px;background:#5470c6"></div>
<div class="t" style="left:226px;top:766.3px;font-size:12px;color:#5470c6;font-weight:normal;line-height:20px;">呼入接通数</div>
<div class="abs" style="left:302px;top:775.5px;width:8px;height:2px;background:#91cc75"></div>
<div class="t" style="left:315.2px;top:766.3px;font-size:12px;color:#91cc75;font-weight:normal;line-height:20px;">外呼接通数</div>
<div class="t" style="left:200px;width:51px;text-align:right;top:796.9px;line-height:20px;font-size:12px;color:#a8abb2">2</div>
<svg style="left:258.5px;top:807.4px" width="994" height="2"><line x1="0" y1="1" x2="994" y2="1" stroke="#e6e8ec" stroke-width="1" stroke-dasharray="5 5"/></svg>
<div class="t" style="left:200px;width:51px;text-align:right;top:822.6px;line-height:20px;font-size:12px;color:#a8abb2">1.5</div>
<svg style="left:258.5px;top:833.4px" width="994" height="2"><line x1="0" y1="1" x2="994" y2="1" stroke="#e6e8ec" stroke-width="1" stroke-dasharray="5 5"/></svg>
<div class="t" style="left:200px;width:51px;text-align:right;top:849.8px;line-height:20px;font-size:12px;color:#a8abb2">1</div>
<svg style="left:258.5px;top:859.1px" width="994" height="2"><line x1="0" y1="1" x2="994" y2="1" stroke="#e6e8ec" stroke-width="1" stroke-dasharray="5 5"/></svg>
<div class="t" style="left:200px;width:51px;text-align:right;top:875.8px;line-height:20px;font-size:12px;color:#a8abb2">0.5</div>
<svg style="left:258.5px;top:886.0px" width="994" height="2"><line x1="0" y1="1" x2="994" y2="1" stroke="#e6e8ec" stroke-width="1" stroke-dasharray="5 5"/></svg>
<svg style="left:0;top:0" width="1920" height="910"><path d="M612.4 913 L653.7 808.4 L695 913" fill="none" stroke="#91d67a" stroke-width="2"/></svg>
<svg style="left:1338.5px;top:726px" width="14" height="12" viewBox="0 0 14 12"><defs><linearGradient id="gb1338" x1="0" y1="0" x2="0" y2="1"><stop offset="0" stop-color="#2a5fe6"/><stop offset="1" stop-color="#40b0f0"/></linearGradient></defs><rect x="0" y="4" width="2.6" height="7.5" fill="url(#gb1338)"/><rect x="5" y="0" width="2.6" height="11.5" fill="url(#gb1338)"/><rect x="10" y="7" width="2.6" height="4.5" fill="url(#gb1338)"/></svg>
<div class="t" style="left:1358px;top:722.4px;font-size:14px;color:#1f1f1f;font-weight:bold;line-height:20px;">座席状态</div>
<div class="abs" style="left:1338.7px;top:756.5px;width:8px;height:8px;border-radius:2px;background:#91d67a"></div>
<div class="t" style="left:1352.3px;top:750.1px;font-size:12px;color:#666;font-weight:normal;line-height:20px;">午休</div>
<div class="abs" style="left:1391.7px;top:756.5px;width:8px;height:8px;border-radius:2px;background:#eef0f4"></div>
<div class="t" style="left:1405px;top:750.1px;font-size:12px;color:#666;font-weight:normal;line-height:20px;">离线接听</div>
<div class="abs" style="left:1468.9px;top:756.5px;width:8px;height:8px;border-radius:2px;background:#91d67a"></div>
<div class="t" style="left:1481.5px;top:750.1px;font-size:12px;color:#666;font-weight:normal;line-height:20px;">空闲</div>
<div class="abs" style="left:1522.1px;top:756.5px;width:8px;height:8px;border-radius:2px;background:#fbc43a"></div>
<div class="t" style="left:1534.7px;top:750.1px;font-size:12px;color:#666;font-weight:normal;line-height:20px;">忙碌</div>
<svg style="left:0;top:0" width="1920" height="910">
<circle cx="1602.9" cy="861" r="40" fill="none" stroke="#eff0f4" stroke-width="20"/>
<circle cx="1602.9" cy="861" r="40" fill="none" stroke="#95dd7c" stroke-width="20" stroke-dasharray="147.7 1000" transform="rotate(-90 1602.9 861) scale(1,-1) translate(0,-1722)"/>
<path d="M1588.3 795.5 H1602.9 V810.4" fill="none" stroke="#95dd7c" stroke-width="1"/>
<path d="M1652 847.2 L1668 842.5 H1680.4" fill="none" stroke="#e8eaee" stroke-width="1"/>
<path d="M1525.4 876.6 H1540.6 L1553.5 873" fill="none" stroke="#95dd7c" stroke-width="1"/>
</svg>
<div class="t" style="left:1548.6px;top:785.7px;font-size:12px;color:#333;font-weight:normal;line-height:20px;">0.00%</div>
<div class="t" style="left:1685.9px;top:833.1px;font-size:12px;color:#333;font-weight:normal;line-height:20px;">42.00%</div>
<div class="t" style="left:1479.2px;top:867.0px;font-size:12px;color:#333;font-weight:normal;line-height:20px;">59.00%</div>
<div class="abs" style="left:0;top:896px;width:1920px;height:14px;background:linear-gradient(90deg,#f6f3f7,#f3f5fb 40%,#f3f6fd)"></div>
<div class="abs" style="left:179px;top:886px;width:1727px;height:10px;border-bottom:1px solid #e2ebf5;border-left:1px solid #e2ebf5;border-right:1px solid #e2ebf5;border-radius:0 0 8px 8px"></div>
<div class="abs" style="left:1879.6px;top:828.3px;width:59.4px;height:59.4px;border-radius:50%;box-shadow:0 6px 36px 6px rgba(20,70,55,0.10)"></div>
<div class="abs" style="left:1879.6px;top:828.3px;width:59.4px;height:59.4px;border-radius:50%;background:linear-gradient(180deg,#1de5a8,#23b38c)"></div>
<svg style="left:1900px;top:849px" width="19" height="19" viewBox="0 0 24 24"><path d="M2.2 5 Q2 3.6 3.2 2.6 L5.6 0.9 Q6.6 0.3 7.3 1.2 L10.6 5.8 Q11.1 6.6 10.3 7.3 L8.3 8.9 Q10.2 13 14.6 15.4 L16.4 13.5 Q17.1 12.8 18 13.3 L22.6 16.5 Q23.5 17.3 22.8 18.3 L21 20.8 Q20.1 22 18.6 22 Q9.5 21.5 3.8 12 Q2.4 8.8 2.2 5 Z" fill="#fff"/></svg>
</body></html>
